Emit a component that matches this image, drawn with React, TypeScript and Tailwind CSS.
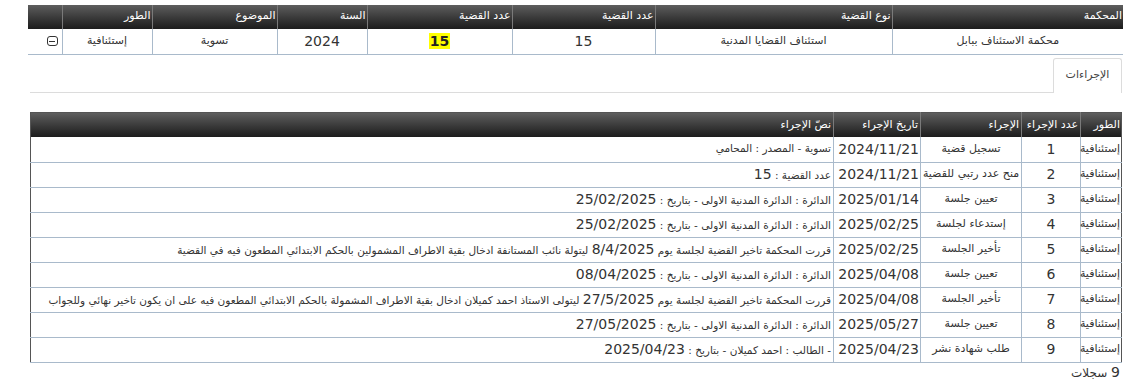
import React from 'react'

// split numbers out so they render larger than the arabic glyphs (tahoma-like look)
function Mixed({ text }: { text: string }) {
  const parts = text.split(/([0-9][0-9/]*)/)
  return (
    <>
      {parts.map((p, i) =>
        /^[0-9]/.test(p) ? (
          <span key={i} className="text-[14px]">{p}</span>
        ) : (
          <span key={i} className="text-[10.5px]">{p}</span>
        )
      )}
    </>
  )
}

const caseHeaders = ['المحكمة', 'نوع القضية', 'عدد القضية', 'عدد القضية', 'السنة', 'الموضوع', 'الطور', '']
const caseCols = ['w-[231px]', 'w-[237px]', 'w-[143px]', 'w-[145px]', 'w-[90px]', 'w-[125px]', 'w-[90px]', 'w-[34px]']

const actions = [
  { n: 1, name: 'تسجيل قضية', date: '2024/11/21', text: 'تسوية - المصدر : المحامي' },
  { n: 2, name: 'منح عدد رتبي للقضية', date: '2024/11/21', text: 'عدد القضية : 15' },
  { n: 3, name: 'تعيين جلسة', date: '2025/01/14', text: 'الدائرة : الدائرة المدنية الاولى - بتاريخ : 25/02/2025' },
  { n: 4, name: 'إستدعاء لجلسة', date: '2025/02/25', text: 'الدائرة : الدائرة المدنية الاولى - بتاريخ : 25/02/2025' },
  { n: 5, name: 'تأخير الجلسة', date: '2025/02/25', text: 'قررت المحكمة تاخير القضية لجلسة يوم 8/4/2025 ليتولة نائب المستانفة ادخال بقية الاطراف المشمولين بالحكم الابتدائي المطعون فيه في القضية' },
  { n: 6, name: 'تعيين جلسة', date: '2025/04/08', text: 'الدائرة : الدائرة المدنية الاولى - بتاريخ : 08/04/2025' },
  { n: 7, name: 'تأخير الجلسة', date: '2025/04/08', text: 'قررت المحكمة تاخير القضية لجلسة يوم 27/5/2025 ليتولى الاستاذ احمد كميلان ادخال بقية الاطراف المشمولة بالحكم الابتدائي المطعون فيه على ان يكون تاخير نهائي وللجواب' },
  { n: 8, name: 'تعيين جلسة', date: '2025/05/27', text: 'الدائرة : الدائرة المدنية الاولى - بتاريخ : 27/05/2025' },
  { n: 9, name: 'طلب شهادة نشر', date: '2025/04/23', text: '- الطالب : احمد كميلان - بتاريخ : 2025/04/23' },
]

export default function App() {
  return (
    <div dir="rtl" className="w-[1148px] h-[388px] bg-white text-[#333] font-['DejaVu_Sans',sans-serif] text-[11px] overflow-hidden">
      {/* case summary table */}
      <div className="pt-[5px] pr-[25px] pl-[28px]">
        <table className="table-fixed w-[1095px] border-collapse">
          <colgroup>
            {caseCols.map((c, i) => <col key={i} className={c} />)}
          </colgroup>
          <thead>
            <tr className="h-[24px] bg-gradient-to-b from-[#5e5e5e] to-[#1c1c1c] text-white">
              {caseHeaders.map((h, i) => (
                <th key={i} className="font-normal text-right align-top pt-[3px] px-[1px] border-l border-[#7a7a7a] last:border-l-0 whitespace-nowrap">{h}</th>
              ))}
            </tr>
          </thead>
          <tbody>
            <tr className="h-[25px] border-b border-[#a9bacb]">
              <td className="text-center border-l border-[#a9bacb]">محكمة الاستئناف ببابل</td>
              <td className="text-center border-l border-[#a9bacb]">استئناف القضايا المدنية</td>
              <td className="text-center border-l border-[#a9bacb] text-[14px]">15</td>
              <td className="text-center border-l border-[#a9bacb] text-[14px]">
                <span className="bg-[#ffff00] font-bold text-[#222] px-[1px]">15</span>
              </td>
              <td className="text-center border-l border-[#a9bacb] text-[14px]">2024</td>
              <td className="text-center border-l border-[#a9bacb]">تسوية</td>
              <td className="text-center border-l border-[#a9bacb]">إستئنافية</td>
              <td className="text-right pr-[4px]">
                <span className="inline-flex items-center justify-center w-[11px] h-[10px] border border-[#333] rounded-[3px] align-middle">
                  <span className="block w-[6px] h-[1px] bg-[#333]" />
                </span>
              </td>
            </tr>
          </tbody>
        </table>
      </div>

      {/* tabs */}
      <div className="mt-[3px] mr-[26px] ml-[30px] flex border-b border-[#dcdcdc]">
        <div className="w-[69px] h-[35px] -mb-[1px] bg-white border border-b-0 border-[#dcdcdc] rounded-t-[3px] flex items-center justify-center text-[11px] text-[#444]">
          الإجراءات
        </div>
      </div>

      {/* actions table */}
      <div className="mt-[19px] mr-[26px] ml-[30px]">
        <table className="table-fixed w-[1092px] border-collapse border border-[#555]">
          <colgroup>
            <col className="w-[41px]" />
            <col className="w-[59px]" />
            <col className="w-[101px]" />
            <col className="w-[87px]" />
            <col />
          </colgroup>
          <thead>
            <tr className="h-[25px] bg-gradient-to-b from-[#626262] to-[#1c1c1c] text-white">
              <th className="font-normal text-right pr-[1px] border-l border-[#7a7a7a] whitespace-nowrap">الطور</th>
              <th className="font-normal text-right pr-[2px] border-l border-[#7a7a7a] whitespace-nowrap">عدد الإجراء</th>
              <th className="font-normal text-right pr-[2px] border-l border-[#7a7a7a] whitespace-nowrap">الإجراء</th>
              <th className="font-normal text-right pr-[2px] border-l border-[#7a7a7a] whitespace-nowrap">تاريخ الإجراء</th>
              <th className="font-normal text-right pr-[2px] whitespace-nowrap">نصّ الإجراء</th>
            </tr>
          </thead>
          <tbody>
            {actions.map(a => (
              <tr key={a.n} className="h-[25px] border-b border-[#a9bacb]">
                <td className="text-right pr-[1px] border-l border-[#a9bacb] whitespace-nowrap">إستئنافية</td>
                <td className="text-center border-l border-[#a9bacb] text-[14px]">{a.n}</td>
                <td className="text-center border-l border-[#a9bacb] whitespace-nowrap">{a.name}</td>
                <td className="text-right pr-[1px] border-l border-[#a9bacb] text-[14px] whitespace-nowrap">{a.date}</td>
                <td className="text-right pr-[2px] whitespace-nowrap overflow-hidden"><Mixed text={a.text} /></td>
              </tr>
            ))}
          </tbody>
        </table>
        <div className="pr-[2px] text-[12px] leading-[18px] text-[#333]">
          <span className="text-[14px]">9</span> سجلات
        </div>
      </div>
    </div>
  )
}
